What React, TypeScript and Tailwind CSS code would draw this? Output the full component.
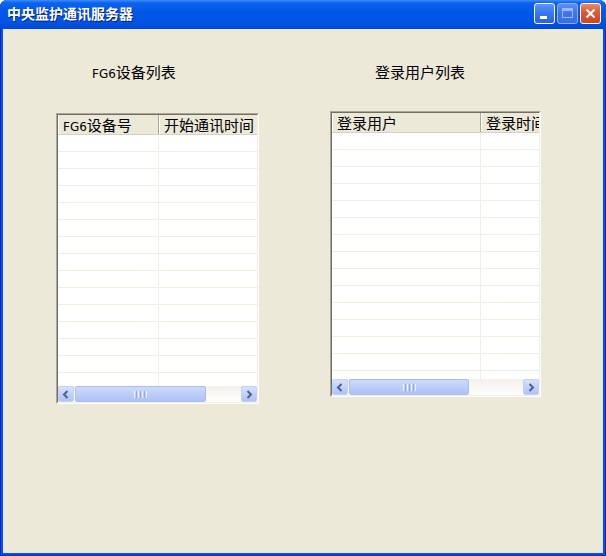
import React from 'react'

const cjk = "font-['Noto_Sans_CJK_SC','Noto_Sans',sans-serif]"

type Col = { label: React.ReactNode; width: number }

function Chevron({ dir }: { dir: 'left' | 'right' }) {
  return (
    <svg width="8" height="9" viewBox="0 0 8 9">
      <path
        d={dir === 'left' ? 'M5.5 1 L2 4.5 L5.5 8' : 'M2.5 1 L6 4.5 L2.5 8'}
        fill="none"
        stroke="#4D6185"
        strokeWidth="2"
      />
    </svg>
  )
}

function ScrollButton({ dir }: { dir: 'left' | 'right' }) {
  return (
    <div className="w-[16px] h-[16px] shrink-0 rounded-[2px] border border-[#C4D2F7] bg-[linear-gradient(to_bottom,#D7E2FD,#BCCEF9_60%,#AFC3F5)] flex items-center justify-center">
      <Chevron dir={dir} />
    </div>
  )
}

function HScrollbar({ thumb }: { thumb: number }) {
  return (
    <div className="h-[16px] flex items-center bg-[linear-gradient(to_bottom,#F3F1EC,#FEFEFB)]">
      <ScrollButton dir="left" />
      <div
        className="h-[16px] ml-[1px] shrink-0 rounded-[2px] border border-[#A8BEF2] bg-[linear-gradient(to_bottom,#CEDBFC,#BACCF9_55%,#AFC2F5)] flex items-center justify-center gap-[1px]"
        style={{ width: thumb }}
      >
        <span className="w-[1px] h-[7px] bg-[#EEF3FE]" />
        <span className="w-[1px] h-[7px] bg-[#8FAAF0]" />
        <span className="w-[1px] h-[7px] bg-[#EEF3FE]" />
        <span className="w-[1px] h-[7px] bg-[#8FAAF0]" />
        <span className="w-[1px] h-[7px] bg-[#EEF3FE]" />
        <span className="w-[1px] h-[7px] bg-[#8FAAF0]" />
        <span className="w-[1px] h-[7px] bg-[#EEF3FE]" />
      </div>
      <div className="flex-1" />
      <ScrollButton dir="right" />
    </div>
  )
}

function ListView({ width, height, cols, rows, thumb }: { width: number; height: number; cols: Col[]; rows: number; thumb: number }) {
  return (
    <div
      className="border border-t-[#ACA899] border-l-[#ACA899] border-r-white border-b-white"
      style={{ width, height }}
    >
      <div className="h-full border border-t-[#716F64] border-l-[#716F64] border-r-[#F1EFE2] border-b-[#F1EFE2] bg-white flex flex-col overflow-hidden">
        <div className="flex h-[20px] shrink-0 bg-[#ECE9D8] border-b border-[#D6D2C2] overflow-hidden">
          {cols.map((c, i) => (
            <div
              key={i}
              className={`${cjk} shrink-0 h-full pl-[5px] border-r border-r-[#ACA899] shadow-[inset_1px_0_0_#FFFFFF] text-[15px] leading-[19px] text-black whitespace-nowrap overflow-hidden`}
              style={{ width: c.width }}
            >
              {c.label}
            </div>
          ))}
        </div>
        <div className="flex-1 overflow-hidden">
          {Array.from({ length: rows }).map((_, r) => (
            <div key={r} className="flex h-[17px] border-b border-[#F0EEE2]">
              {cols.map((c, i) => (
                <div key={i} className="shrink-0 h-full border-r border-[#F0EEE2]" style={{ width: c.width }} />
              ))}
            </div>
          ))}
        </div>
        <HScrollbar thumb={thumb} />
      </div>
    </div>
  )
}

function TitleButton({ kind }: { kind: 'min' | 'max' | 'close' }) {
  if (kind === 'close') {
    return (
      <div className="w-[21px] h-[21px] rounded-[3px] border border-white bg-[linear-gradient(to_bottom,#EA8A6B,#E05A35_40%,#D2441E)] flex items-center justify-center">
        <svg width="11" height="11" viewBox="0 0 11 11">
          <path d="M1.5 1.5 L9.5 9.5 M9.5 1.5 L1.5 9.5" stroke="white" strokeWidth="2.2" />
        </svg>
      </div>
    )
  }
  if (kind === 'max') {
    return (
      <div className="w-[21px] h-[21px] rounded-[3px] border border-[#8EAEF3] bg-[linear-gradient(to_bottom,#5C8EF3,#3E74EA_50%,#3A6DE3)] flex items-center justify-center">
        <div className="w-[11px] h-[10px] border border-[#9AB6F5] border-t-[3px]" />
      </div>
    )
  }
  return (
    <div className="w-[21px] h-[21px] rounded-[3px] border border-white bg-[linear-gradient(to_bottom,#5B94FA,#3A78F2_45%,#2A62E4)] flex items-end pl-[5px] pb-[4px]">
      <div className="w-[7px] h-[3px] bg-white" />
    </div>
  )
}

export default function App() {
  return (
    <div className="w-[606px] h-[556px] flex flex-col rounded-t-[7px] overflow-hidden bg-[#0A50E0] shadow-[inset_0_0_0_1px_#0028C8]">
      {/* title bar */}
      <div className="h-[29px] shrink-0 flex items-center pl-[7px] pr-[5px] bg-[linear-gradient(to_bottom,#3C8CF9_0%,#0D63EC_10%,#0058E6_40%,#0055E3_75%,#0048D8_100%)]">
        <span className={`${cjk} font-bold text-[14px] text-white [text-shadow:1px_1px_0_#0A1E80] mt-[-2px]`}>
          中央监护通讯服务器
        </span>
        <div className="flex-1" />
        <div className="flex gap-[2px] mt-[-3px]">
          <TitleButton kind="min" />
          <TitleButton kind="max" />
          <TitleButton kind="close" />
        </div>
      </div>

      {/* client area */}
      <div className="flex-1 mx-[3px] mb-[3px] bg-[#ECE9D8] flex items-start">
        <div className="ml-[53px] flex flex-col">
          <div className={`${cjk} mt-[33px] pl-[36px] h-[20px] text-[15px] leading-[20px] text-black`}>
            <span className="font-['DejaVu_Sans',sans-serif] text-[12px]">FG6</span>设备列表
          </div>
          <div className="mt-[31px]">
            <ListView
              width={203}
              height={291}
              rows={15}
              thumb={131}
              cols={[
                { label: <><span className="font-['DejaVu_Sans',sans-serif] text-[12px]">FG6</span>设备号</>, width: 101 },
                { label: '开始通讯时间', width: 110 },
              ]}
            />
          </div>
        </div>

        <div className="ml-[71px] flex flex-col">
          <div className={`${cjk} mt-[33px] pl-[45px] h-[20px] text-[15px] leading-[20px] text-black`}>
            登录用户列表
          </div>
          <div className="mt-[29px]">
            <ListView
              width={211}
              height={286}
              rows={15}
              thumb={120}
              cols={[
                { label: '登录用户', width: 149 },
                { label: '登录时间', width: 100 },
              ]}
            />
          </div>
        </div>
      </div>
    </div>
  )
}
